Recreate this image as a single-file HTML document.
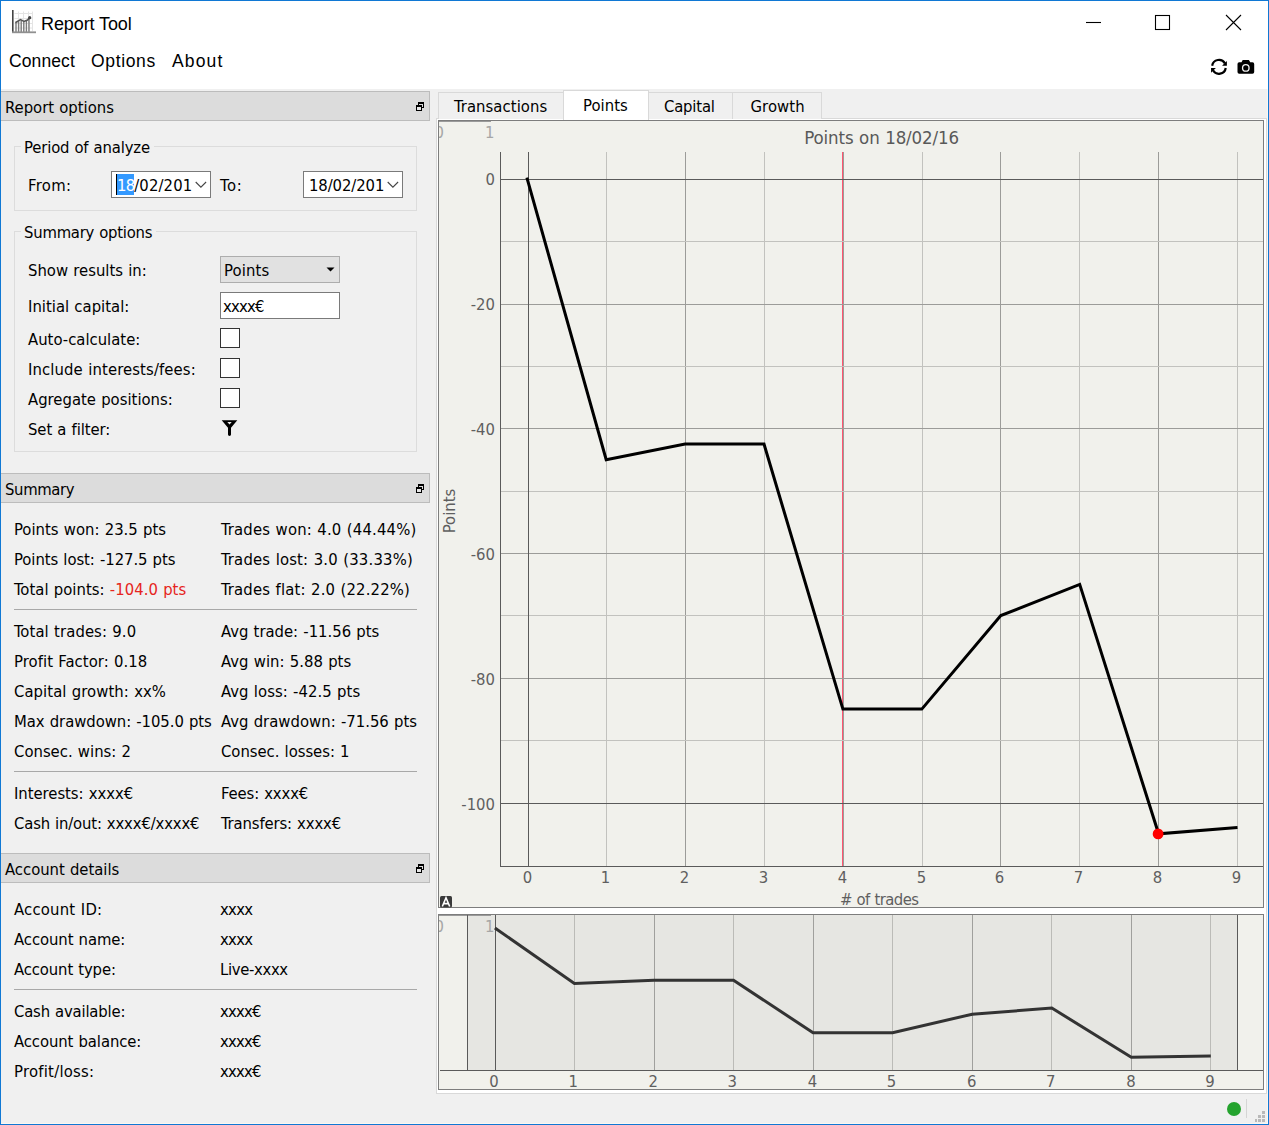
<!DOCTYPE html>
<html><head><meta charset="utf-8"><title>Report Tool</title>
<style>
html,body{margin:0;padding:0;background:#f0f0f0;}
body{width:1269px;height:1125px;overflow:hidden;position:relative;}
#win{position:absolute;left:0;top:0;width:1269px;height:1125px;background:#f0f0f0;overflow:hidden;}
.t{position:absolute;white-space:nowrap;height:30px;line-height:30px;font-family:"DejaVu Sans Condensed","DejaVu Sans","Liberation Sans",sans-serif;font-stretch:condensed;word-spacing:0.5px;}
.s{position:absolute;white-space:nowrap;height:30px;line-height:30px;font-family:"Liberation Sans","DejaVu Sans",sans-serif;}
.hdr{position:absolute;left:1px;width:428px;height:28px;background:#dcdcdc;border:1px solid #bcbcbc;border-left:none;}
.grp{position:absolute;border:1px solid #dcdcdc;box-sizing:border-box;}
.sep{position:absolute;left:14px;width:403px;height:1px;background:#a8a8a8;}
.cb{position:absolute;left:220px;width:18px;height:18px;border:1px solid #333;background:#fff;}
svg{position:absolute;overflow:visible;}
</style></head><body><div id="win">

<div style="position:absolute;left:0px;top:0px;width:1269px;height:89px;background:#fff;"></div>
<svg style="left:11px;top:9px" width="26" height="26" viewBox="0 0 26 26">
<g stroke="#e4e4e4" stroke-width="1" fill="none"><path d="M3.500 4.500H22M3.500 9.500H22M3.500 14.500H22M3.500 19H22M7.500 2.500V22M12.500 2.500V22M17.500 2.500V22M21.500 2.500V22"/></g>
<g stroke="#7a7a7a" stroke-width="1.400" fill="none"><path d="M5 23V14M7.600 23V12.200M10.200 23V11.200M12.800 23V12.600M15.400 23V12M18 23V10"/></g>
<path d="M4.300 13.700L9.500 10.600L13 12.400L16.500 11.100L18.500 8.900" stroke="#555" stroke-width="1.600" fill="none"/>
<circle cx="18.700" cy="8.700" r="1.600" fill="#444"/>
<path d="M1.800 1V23.200" stroke="#444" stroke-width="1.600" fill="none"/>
<path d="M1 23.300H25" stroke="#909090" stroke-width="1.800" fill="none"/>
</svg>
<div class="s" style="left:41px;top:8.75px;font-size:18px;color:#000;letter-spacing:-0.094px;">Report Tool</div>
<div class="s" style="left:9px;top:45.93px;font-size:17.5px;color:#000;letter-spacing:0.102px;">Connect</div>
<div class="s" style="left:91px;top:45.93px;font-size:17.5px;color:#000;letter-spacing:0.641px;">Options</div>
<div class="s" style="left:172px;top:45.93px;font-size:17.5px;color:#000;letter-spacing:1.153px;">About</div>
<svg style="left:0;top:0" width="1269" height="89">
<path d="M1086 22.500H1101" stroke="#000" stroke-width="1.100" fill="none"/>
<rect x="1155.500" y="15.500" width="14" height="14" stroke="#000" stroke-width="1.100" fill="none"/>
<path d="M1226 15L1241 30M1241 15L1226 30" stroke="#000" stroke-width="1.100" fill="none"/>
<g transform="translate(1204,52)"><g><path d="M8.150 13.700A6.900 6.900 0 0 1 20.950 11.400" stroke="#000" stroke-width="2.200" fill="none"/><path d="M22.850 8.900V13.700H18.050Z" fill="#000"/></g><g transform="rotate(180 14.950 14.850)"><path d="M8.150 13.700A6.900 6.900 0 0 1 20.950 11.400" stroke="#000" stroke-width="2.200" fill="none"/><path d="M22.850 8.900V13.700H18.050Z" fill="#000"/></g></g>
<g transform="translate(1237.500,59.500)">
<path fill="#000" d="M5.200 0.400h6.200l1.300 2.300h2.300a1.700 1.700 0 0 1 1.700 1.700v8.200a1.700 1.700 0 0 1-1.700 1.700h-13.300a1.700 1.700 0 0 1-1.700-1.700v-8.200a1.700 1.700 0 0 1 1.700-1.700h2.300z"/>
<circle cx="8.300" cy="8.400" r="3.900" fill="#f4f4f4"/><circle cx="8.300" cy="8.400" r="2.600" fill="#000"/>
</g>
</svg>
<div class="hdr" style="top:91px"></div>
<div class="t" style="left:5px;top:93.19px;font-size:16.5px;color:#000;letter-spacing:-0.008px;">Report options</div>
<svg style="left:416px;top:102px" width="8" height="9" shape-rendering="crispEdges"><rect x="2" y="0" width="6" height="6" fill="#000"/><rect x="3" y="2" width="4" height="3" fill="#dcdcdc"/><rect x="0" y="3" width="6" height="6" fill="#000"/><rect x="1" y="5" width="4" height="3" fill="#e6e6e6"/></svg>
<div class="grp" style="left:14px;top:146px;width:403px;height:65px"></div>
<div style="position:absolute;left:21px;top:140px;width:133px;height:14px;background:#f0f0f0;"></div>
<div class="t" style="left:24px;top:133.19px;font-size:16.5px;color:#000;letter-spacing:-0.147px;">Period of analyze</div>
<div class="t" style="left:28px;top:171.19px;font-size:16.5px;color:#000;letter-spacing:0.335px;">From:</div>
<div class="t" style="left:220px;top:171.19px;font-size:16.5px;color:#000;letter-spacing:0.652px;">To:</div>
<div style="position:absolute;left:111px;top:171px;width:98px;height:25px;background:#fff;border:1px solid #7a7a7a;"></div>
<div style="position:absolute;left:117px;top:174px;width:17px;height:21px;background:#3399ff;"></div>
<div style="position:absolute;left:116px;top:174px;width:1px;height:21px;background:#000;"></div>
<div class="t" style="left:117px;top:171.19px;font-size:16.5px;color:#fff;letter-spacing:-0.795px;">18</div>
<div class="t" style="left:134.2px;top:171.19px;font-size:16.5px;color:#000;letter-spacing:0.126px;">/02/201</div>
<svg style="left:195px;top:181px" width="12" height="8"><path d="M0.700 1L5.900 6.200L11.100 1" stroke="#444" stroke-width="1.100" fill="none"/></svg>
<div style="position:absolute;left:303px;top:171px;width:98px;height:25px;background:#fff;border:1px solid #7a7a7a;"></div>
<div class="t" style="left:309px;top:171.19px;font-size:16.5px;color:#000;letter-spacing:-0.090px;">18/02/201</div>
<svg style="left:387px;top:181px" width="12" height="8"><path d="M0.700 1L5.900 6.200L11.100 1" stroke="#444" stroke-width="1.100" fill="none"/></svg>
<div class="grp" style="left:14px;top:231px;width:403px;height:221px"></div>
<div style="position:absolute;left:21px;top:225px;width:135px;height:14px;background:#f0f0f0;"></div>
<div class="t" style="left:24px;top:218.19px;font-size:16.5px;color:#000;letter-spacing:-0.222px;">Summary options</div>
<div class="t" style="left:28px;top:256.19px;font-size:16.5px;color:#000;letter-spacing:0.005px;">Show results in:</div>
<div style="position:absolute;left:220px;top:256px;width:118px;height:25px;background:#e1e1e1;border:1px solid #adadad;"></div>
<div class="t" style="left:224px;top:256.19px;font-size:16.5px;color:#000;letter-spacing:0.128px;">Points</div>
<svg style="left:326px;top:267px" width="9" height="5"><path d="M0.500 0.500H8.500L4.500 4.500Z" fill="#000"/></svg>
<div class="t" style="left:28px;top:292.19px;font-size:16.5px;color:#000;letter-spacing:0.010px;">Initial capital:</div>
<div style="position:absolute;left:220px;top:292px;width:118px;height:25px;background:#fff;border:1px solid #7a7a7a;"></div>
<div class="t" style="left:223px;top:292.19px;font-size:16.5px;color:#000;letter-spacing:-0.800px;">xxxx€</div>
<div class="t" style="left:28px;top:325.19px;font-size:16.5px;color:#000;letter-spacing:0.002px;">Auto-calculate:</div>
<div class="t" style="left:28px;top:355.19px;font-size:16.5px;color:#000;letter-spacing:0.116px;">Include interests/fees:</div>
<div class="t" style="left:28px;top:385.19px;font-size:16.5px;color:#000;letter-spacing:0.006px;">Agregate positions:</div>
<div class="t" style="left:28px;top:415.19px;font-size:16.5px;color:#000;letter-spacing:-0.066px;">Set a filter:</div>
<div class="cb" style="top:328px"></div>
<div class="cb" style="top:358px"></div>
<div class="cb" style="top:388px"></div>
<svg style="left:221px;top:419px" width="18" height="18" viewBox="0 0 18 18"><path d="M0.700 1.300H16.300L10 8.800V15.600Q10 16.900 8.500 16.900Q7 16.900 7 15.600V8.800Z" fill="#000"/><path d="M6.300 3.100H10.700L8.500 5.600Z" fill="#f0f0f0"/></svg>
<div class="hdr" style="top:473px"></div>
<div class="t" style="left:5px;top:475.19px;font-size:16.5px;color:#000;letter-spacing:-0.350px;">Summary</div>
<svg style="left:416px;top:484px" width="8" height="9" shape-rendering="crispEdges"><rect x="2" y="0" width="6" height="6" fill="#000"/><rect x="3" y="2" width="4" height="3" fill="#dcdcdc"/><rect x="0" y="3" width="6" height="6" fill="#000"/><rect x="1" y="5" width="4" height="3" fill="#e6e6e6"/></svg>
<div class="t" style="left:14px;top:515.19px;font-size:16.5px;color:#000;letter-spacing:0.009px;">Points won: 23.5 pts</div>
<div class="t" style="left:221px;top:515.19px;font-size:16.5px;color:#000;letter-spacing:0.176px;">Trades won: 4.0 (44.44%)</div>
<div class="t" style="left:14px;top:545.19px;font-size:16.5px;color:#000;letter-spacing:-0.059px;">Points lost: -127.5 pts</div>
<div class="t" style="left:221px;top:545.19px;font-size:16.5px;color:#000;letter-spacing:0.184px;">Trades lost: 3.0 (33.33%)</div>
<div class="t" style="left:221px;top:575.19px;font-size:16.5px;color:#000;letter-spacing:0.171px;">Trades flat: 2.0 (22.22%)</div>
<div class="t" style="left:14px;top:617.19px;font-size:16.5px;color:#000;letter-spacing:0.087px;">Total trades: 9.0</div>
<div class="t" style="left:221px;top:617.19px;font-size:16.5px;color:#000;letter-spacing:-0.007px;">Avg trade: -11.56 pts</div>
<div class="t" style="left:14px;top:647.19px;font-size:16.5px;color:#000;letter-spacing:0.063px;">Profit Factor: 0.18</div>
<div class="t" style="left:221px;top:647.19px;font-size:16.5px;color:#000;letter-spacing:0.027px;">Avg win: 5.88 pts</div>
<div class="t" style="left:14px;top:677.19px;font-size:16.5px;color:#000;letter-spacing:0.065px;">Capital growth: xx%</div>
<div class="t" style="left:221px;top:677.19px;font-size:16.5px;color:#000;letter-spacing:0.058px;">Avg loss: -42.5 pts</div>
<div class="t" style="left:14px;top:707.19px;font-size:16.5px;color:#000;letter-spacing:-0.049px;">Max drawdown: -105.0 pts</div>
<div class="t" style="left:221px;top:707.19px;font-size:16.5px;color:#000;letter-spacing:0.017px;">Avg drawdown: -71.56 pts</div>
<div class="t" style="left:14px;top:737.19px;font-size:16.5px;color:#000;letter-spacing:0.007px;">Consec. wins: 2</div>
<div class="t" style="left:221px;top:737.19px;font-size:16.5px;color:#000;letter-spacing:-0.031px;">Consec. losses: 1</div>
<div class="t" style="left:14px;top:779.19px;font-size:16.5px;color:#000;letter-spacing:-0.037px;">Interests: xxxx€</div>
<div class="t" style="left:221px;top:779.19px;font-size:16.5px;color:#000;letter-spacing:-0.113px;">Fees: xxxx€</div>
<div class="t" style="left:14px;top:809.19px;font-size:16.5px;color:#000;letter-spacing:-0.155px;">Cash in/out: xxxx€/xxxx€</div>
<div class="t" style="left:221px;top:809.19px;font-size:16.5px;color:#000;letter-spacing:-0.117px;">Transfers: xxxx€</div>
<div class="t" style="left:14px;top:575.19px;font-size:16.5px;color:#000;letter-spacing:0.032px;">Total points: <span style="color:#e62420">-104.0 pts</span></div>
<div class="sep" style="top:609px"></div>
<div class="sep" style="top:771px"></div>
<div class="hdr" style="top:853px"></div>
<div class="t" style="left:5px;top:855.19px;font-size:16.5px;color:#000;letter-spacing:-0.019px;">Account details</div>
<svg style="left:416px;top:864px" width="8" height="9" shape-rendering="crispEdges"><rect x="2" y="0" width="6" height="6" fill="#000"/><rect x="3" y="2" width="4" height="3" fill="#dcdcdc"/><rect x="0" y="3" width="6" height="6" fill="#000"/><rect x="1" y="5" width="4" height="3" fill="#e6e6e6"/></svg>
<div class="t" style="left:14px;top:895.19px;font-size:16.5px;color:#000;letter-spacing:0.215px;">Account ID:</div>
<div class="t" style="left:220px;top:895.19px;font-size:16.5px;color:#000;letter-spacing:-0.710px;">xxxx</div>
<div class="t" style="left:14px;top:925.19px;font-size:16.5px;color:#000;letter-spacing:-0.072px;">Account name:</div>
<div class="t" style="left:220px;top:925.19px;font-size:16.5px;color:#000;letter-spacing:-0.710px;">xxxx</div>
<div class="t" style="left:14px;top:955.19px;font-size:16.5px;color:#000;letter-spacing:-0.114px;">Account type:</div>
<div class="t" style="left:220px;top:955.19px;font-size:16.5px;color:#000;letter-spacing:-0.333px;">Live-xxxx</div>
<div class="t" style="left:14px;top:996.69px;font-size:16.5px;color:#000;letter-spacing:-0.170px;">Cash available:</div>
<div class="t" style="left:220px;top:996.69px;font-size:16.5px;color:#000;letter-spacing:-0.756px;">xxxx€</div>
<div class="t" style="left:14px;top:1026.69px;font-size:16.5px;color:#000;letter-spacing:-0.080px;">Account balance:</div>
<div class="t" style="left:220px;top:1026.69px;font-size:16.5px;color:#000;letter-spacing:-0.756px;">xxxx€</div>
<div class="t" style="left:14px;top:1056.69px;font-size:16.5px;color:#000;letter-spacing:0.248px;">Profit/loss:</div>
<div class="t" style="left:220px;top:1056.69px;font-size:16.5px;color:#000;letter-spacing:-0.756px;">xxxx€</div>
<div class="sep" style="top:989px"></div>
<div style="position:absolute;left:436px;top:118px;width:829px;height:974px;background:#fff;border:1px solid #d9d9d9;box-sizing:content-box;"></div>
<div style="position:absolute;left:438px;top:92px;width:125px;height:26px;background:#f0f0f0;border:1px solid #d9d9d9;border-bottom:none;"></div>
<div class="t" style="left:454px;top:92.19px;font-size:16.5px;color:#000;letter-spacing:0.074px;">Transactions</div>
<div style="position:absolute;left:647px;top:92px;width:85px;height:26px;background:#f0f0f0;border:1px solid #d9d9d9;border-bottom:none;"></div>
<div class="t" style="left:664px;top:92.19px;font-size:16.5px;color:#000;letter-spacing:-0.180px;">Capital</div>
<div style="position:absolute;left:732px;top:92px;width:88px;height:26px;background:#f0f0f0;border:1px solid #d9d9d9;border-bottom:none;"></div>
<div class="t" style="left:750.5px;top:92.19px;font-size:16.5px;color:#000;letter-spacing:0.099px;">Growth</div>
<div style="position:absolute;left:563px;top:90px;width:84px;height:29px;background:#fff;border:1px solid #d9d9d9;border-bottom:none;"></div>
<div class="t" style="left:583px;top:90.69px;font-size:16.5px;color:#000;letter-spacing:0.061px;">Points</div>
<svg style="left:438px;top:120px" width="826" height="788" viewBox="438 120 826 788" shape-rendering="crispEdges">
<rect x="438" y="120" width="826" height="788" fill="#7d7d7d"/><rect x="439" y="121" width="824" height="786" fill="#f1f1ec"/>
<rect x="439" y="121" width="52" height="1" fill="#9a9a9a"/>
<rect x="606" y="152" width="1" height="714" fill="#c2c2be"/>
<rect x="685" y="152" width="1" height="714" fill="#9c9c99"/>
<rect x="764" y="152" width="1" height="714" fill="#c2c2be"/>
<rect x="843" y="152" width="1" height="714" fill="#9c9c99"/>
<rect x="922" y="152" width="1" height="714" fill="#c2c2be"/>
<rect x="1000" y="152" width="1" height="714" fill="#9c9c99"/>
<rect x="1079" y="152" width="1" height="714" fill="#c2c2be"/>
<rect x="1158" y="152" width="1" height="714" fill="#9c9c99"/>
<rect x="1237" y="152" width="1" height="714" fill="#c2c2be"/>
<rect x="842" y="152" width="1" height="714" fill="#ff5570"/>
<rect x="501" y="179" width="762" height="1" fill="#5a5a5a"/>
<rect x="501" y="241" width="762" height="1" fill="#c2c2be"/>
<rect x="501" y="304" width="762" height="1" fill="#9c9c99"/>
<rect x="501" y="366" width="762" height="1" fill="#c2c2be"/>
<rect x="501" y="428" width="762" height="1" fill="#9c9c99"/>
<rect x="501" y="491" width="762" height="1" fill="#c2c2be"/>
<rect x="501" y="553" width="762" height="1" fill="#9c9c99"/>
<rect x="501" y="615" width="762" height="1" fill="#c2c2be"/>
<rect x="501" y="678" width="762" height="1" fill="#9c9c99"/>
<rect x="501" y="740" width="762" height="1" fill="#c2c2be"/>
<rect x="501" y="803" width="762" height="1" fill="#5a5a5a"/>
<rect x="528" y="152" width="1" height="714" fill="#5a5a5a"/>
<rect x="500" y="152" width="1" height="715" fill="#5a5a5a"/>
<rect x="500" y="866" width="763" height="1" fill="#5a5a5a"/>
</svg>
<svg style="left:0;top:0" width="1269" height="1125"><polyline points="526.9,177.6 527.3,179.1 606.2,459.7 685.1,444.1 764.0,444.1 842.9,709.1 921.8,709.1 1000.8,615.6 1079.7,584.4 1158.6,833.8 1237.5,827.5" fill="none" stroke="#000" stroke-width="3" stroke-linejoin="miter" stroke-linecap="butt"/><circle cx="1158.100" cy="833.9" r="5.400" fill="#f00"/><rect x="440" y="896" width="12" height="11.500" fill="#3a3a3a" rx="1.500"/><path d="M442.300 906.500L446 897.800L449.700 906.500M443.600 903.600H448.400" stroke="#fff" stroke-width="1.600" fill="none"/></svg>
<div class="t" style="left:804.3px;top:122.50px;font-size:18.5px;color:#595959;letter-spacing:-0.132px;">Points on 18/02/16</div>
<div class="t" style="left:427.5px;width:200px;text-align:center;top:863.19px;font-size:16.5px;color:#5f5f5f">0</div>
<div class="t" style="left:505.5px;width:200px;text-align:center;top:863.19px;font-size:16.5px;color:#5f5f5f">1</div>
<div class="t" style="left:584.5px;width:200px;text-align:center;top:863.19px;font-size:16.5px;color:#5f5f5f">2</div>
<div class="t" style="left:663.5px;width:200px;text-align:center;top:863.19px;font-size:16.5px;color:#5f5f5f">3</div>
<div class="t" style="left:742.5px;width:200px;text-align:center;top:863.19px;font-size:16.5px;color:#5f5f5f">4</div>
<div class="t" style="left:821.5px;width:200px;text-align:center;top:863.19px;font-size:16.5px;color:#5f5f5f">5</div>
<div class="t" style="left:899.5px;width:200px;text-align:center;top:863.19px;font-size:16.5px;color:#5f5f5f">6</div>
<div class="t" style="left:978.5px;width:200px;text-align:center;top:863.19px;font-size:16.5px;color:#5f5f5f">7</div>
<div class="t" style="left:1057.5px;width:200px;text-align:center;top:863.19px;font-size:16.5px;color:#5f5f5f">8</div>
<div class="t" style="left:1136.5px;width:200px;text-align:center;top:863.19px;font-size:16.5px;color:#5f5f5f">9</div>
<div class="t" style="left:295px;width:200px;text-align:right;top:165.19px;font-size:16.5px;color:#5f5f5f">0</div>
<div class="t" style="left:295px;width:200px;text-align:right;top:290.19px;font-size:16.5px;color:#5f5f5f">-20</div>
<div class="t" style="left:295px;width:200px;text-align:right;top:415.19px;font-size:16.5px;color:#5f5f5f">-40</div>
<div class="t" style="left:295px;width:200px;text-align:right;top:540.19px;font-size:16.5px;color:#5f5f5f">-60</div>
<div class="t" style="left:295px;width:200px;text-align:right;top:665.19px;font-size:16.5px;color:#5f5f5f">-80</div>
<div class="t" style="left:295px;width:200px;text-align:right;top:790.19px;font-size:16.5px;color:#5f5f5f">-100</div>
<div class="t" style="left:840px;top:884.79px;font-size:16.5px;color:#5f5f5f;letter-spacing:-0.544px;"># of trades</div>
<div class="t" style="left:350.3px;width:200px;text-align:center;top:496px;font-size:16.5px;color:#5f5f5f;transform:rotate(-90deg);">Points</div>
<div style="position:absolute;left:439px;top:120px;width:60px;height:28px;overflow:hidden">
<div class="t" style="left:-4.5px;top:-1.81px;font-size:16.5px;color:#a6a6a6;">0</div>
<div class="t" style="left:46px;top:-1.81px;font-size:16.5px;color:#a6a6a6;">1</div>
</div>
<svg style="left:438px;top:914px" width="826" height="176" viewBox="438 914 826 176" shape-rendering="crispEdges">
<rect x="438" y="914" width="826" height="176" fill="#7d7d7d"/><rect x="439" y="915" width="824" height="174" fill="#f1f1ec"/>
<rect x="467" y="915" width="771" height="155" fill="#e6e6e2"/>
<rect x="439" y="915" width="52" height="1" fill="#9a9a9a"/>
<rect x="495" y="915" width="1" height="155" fill="#5a5a5a"/>
<rect x="574" y="915" width="1" height="155" fill="#bbbbb7"/>
<rect x="654" y="915" width="1" height="155" fill="#a0a09d"/>
<rect x="733" y="915" width="1" height="155" fill="#bbbbb7"/>
<rect x="813" y="915" width="1" height="155" fill="#a0a09d"/>
<rect x="892" y="915" width="1" height="155" fill="#bbbbb7"/>
<rect x="972" y="915" width="1" height="155" fill="#a0a09d"/>
<rect x="1051" y="915" width="1" height="155" fill="#bbbbb7"/>
<rect x="1131" y="915" width="1" height="155" fill="#a0a09d"/>
<rect x="1210" y="915" width="1" height="155" fill="#bbbbb7"/>
<rect x="467" y="915" width="1" height="155" fill="#5a5a5a"/>
<rect x="1237" y="915" width="1" height="155" fill="#5a5a5a"/>
<rect x="440" y="1070" width="823" height="1" fill="#5a5a5a"/>
</svg>
<svg style="left:0;top:0" width="1269" height="1125"><polyline points="494.9,928.0 574.4,983.4 654.0,980.3 733.5,980.3 813.1,1032.7 892.6,1032.7 972.2,1014.2 1051.8,1008.0 1131.3,1057.3 1210.8,1056.1" fill="none" stroke="#333" stroke-width="3" stroke-linejoin="miter" stroke-linecap="butt"/></svg>
<div class="t" style="left:394.0px;width:200px;text-align:center;top:1067.19px;font-size:16.5px;color:#5f5f5f">0</div>
<div class="t" style="left:473.1111111111111px;width:200px;text-align:center;top:1067.19px;font-size:16.5px;color:#5f5f5f">1</div>
<div class="t" style="left:553.2222222222222px;width:200px;text-align:center;top:1067.19px;font-size:16.5px;color:#5f5f5f">2</div>
<div class="t" style="left:632.3333333333334px;width:200px;text-align:center;top:1067.19px;font-size:16.5px;color:#5f5f5f">3</div>
<div class="t" style="left:712.4444444444445px;width:200px;text-align:center;top:1067.19px;font-size:16.5px;color:#5f5f5f">4</div>
<div class="t" style="left:791.5555555555555px;width:200px;text-align:center;top:1067.19px;font-size:16.5px;color:#5f5f5f">5</div>
<div class="t" style="left:871.6666666666666px;width:200px;text-align:center;top:1067.19px;font-size:16.5px;color:#5f5f5f">6</div>
<div class="t" style="left:950.7777777777778px;width:200px;text-align:center;top:1067.19px;font-size:16.5px;color:#5f5f5f">7</div>
<div class="t" style="left:1030.888888888889px;width:200px;text-align:center;top:1067.19px;font-size:16.5px;color:#5f5f5f">8</div>
<div class="t" style="left:1110.0px;width:200px;text-align:center;top:1067.19px;font-size:16.5px;color:#5f5f5f">9</div>
<div style="position:absolute;left:439px;top:914px;width:60px;height:28px;overflow:hidden">
<div class="t" style="left:-4.5px;top:-1.81px;font-size:16.5px;color:#a6a6a6;">0</div>
<div class="t" style="left:46px;top:-1.81px;font-size:16.5px;color:#a6a6a6;">1</div>
</div>
<div style="position:absolute;left:1227px;top:1102px;width:14px;height:14px;background:#24a32e;border-radius:50%;"></div>
<svg style="left:0;top:0" width="1269" height="1125" shape-rendering="crispEdges"><rect x="1262" y="1111" width="3" height="3" fill="#b9b9b9"/><rect x="1258" y="1115" width="3" height="3" fill="#b9b9b9"/><rect x="1262" y="1115" width="3" height="3" fill="#b9b9b9"/><rect x="1255" y="1119" width="2" height="3" fill="#b9b9b9"/><rect x="1258" y="1119" width="3" height="3" fill="#b9b9b9"/><rect x="1262" y="1119" width="3" height="3" fill="#b9b9b9"/></svg>
<div style="position:absolute;left:1246px;top:1099px;width:1px;height:19px;background:#d5d5d5;"></div>
<div style="position:absolute;left:1267px;top:89px;width:1px;height:1035px;background:#fbf7f1;"></div>
<div style="position:absolute;left:1px;top:1123px;width:1267px;height:1px;background:#fbf7f1;"></div>
<div style="position:absolute;left:0px;top:0px;width:1267px;height:1123px;border:1px solid #1078d4;pointer-events:none;"></div>
</div></body></html>
